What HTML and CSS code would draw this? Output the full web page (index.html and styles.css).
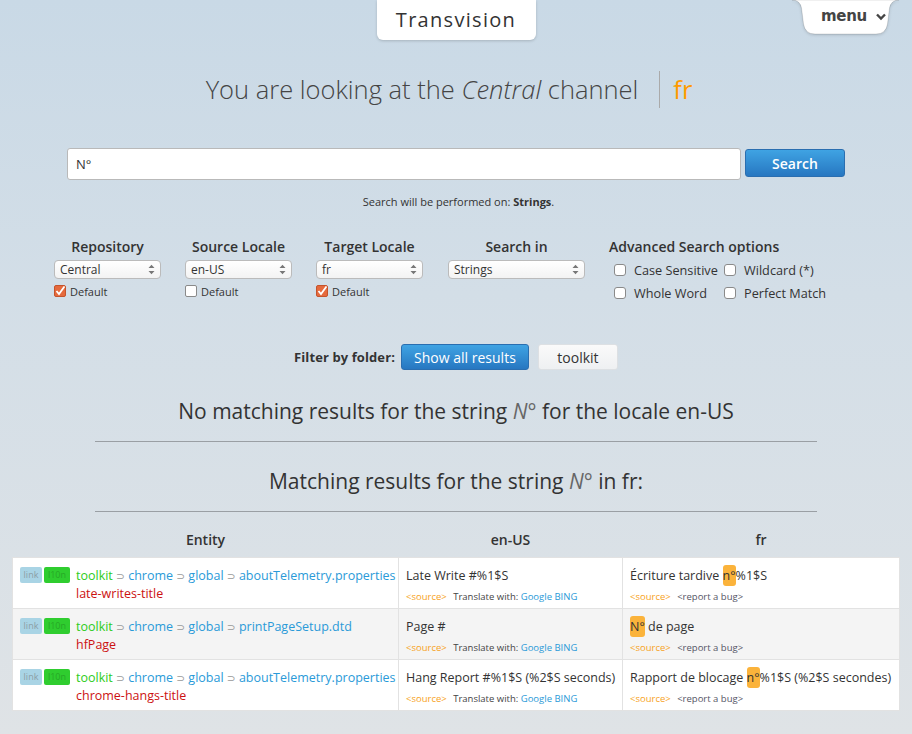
FILE: index.html
```html
<!DOCTYPE html>
<html lang="en">
<head>
<meta charset="utf-8">
<title>Transvision</title>
<link rel="stylesheet" href="styles.css">
</head>
<body>
<div class="page">
  <header class="topbar">
    <div class="brand">Transvision</div>
    <a class="menu" href="#">
      <svg class="tab" width="107" height="38" viewBox="0 0 107 38"><path d="M0 0 Q8 0 9.5 8 L11.5 24 Q13 34 23 34 L84 34 Q94 34 95.5 24 L97.5 8 Q99 0 107 0 Z" fill="#fff" stroke="rgba(0,0,0,0.12)" stroke-width="1"/></svg>
      <span class="mlabel">menu</span>
      <svg class="chev" width="10" height="8" viewBox="0 0 10 8"><path d="M1 1.5 L5 5.5 L9 1.5" fill="none" stroke="#444" stroke-width="2.4"/></svg>
    </a>
  </header>

  <h1 class="channel"><span class="channel-text">You are looking at the <em>Central</em> channel</span><span class="sep"></span><span class="loc">fr</span></h1>

  <form class="searchbar">
    <div class="input">N°</div>
    <button class="btn btn-blue btn-search" type="button">Search</button>
  </form>
  <p class="performed">Search will be performed on: <strong>Strings</strong>.</p>

  <div class="filters">
    <div class="fcol w107">
      <div class="fhead">Repository</div>
      <div class="sel"><span>Central</span><svg class="arr" width="7" height="11" viewBox="0 0 7 11"><path d="M0.5 4 L3.5 0.8 L6.5 4 Z M0.5 7 L3.5 10.2 L6.5 7 Z" fill="#777"/></svg></div>
      <label class="def"><span class="cb on"><svg width="10" height="10" viewBox="0 0 10 10"><path d="M1.5 5 L4 8 L9.5 0.5" fill="none" stroke="#fff" stroke-width="1.8"/></svg></span>Default</label>
    </div>
    <div class="fcol w107">
      <div class="fhead">Source Locale</div>
      <div class="sel"><span>en-US</span><svg class="arr" width="7" height="11" viewBox="0 0 7 11"><path d="M0.5 4 L3.5 0.8 L6.5 4 Z M0.5 7 L3.5 10.2 L6.5 7 Z" fill="#777"/></svg></div>
      <label class="def"><span class="cb"></span>Default</label>
    </div>
    <div class="fcol w107">
      <div class="fhead">Target Locale</div>
      <div class="sel"><span>fr</span><svg class="arr" width="7" height="11" viewBox="0 0 7 11"><path d="M0.5 4 L3.5 0.8 L6.5 4 Z M0.5 7 L3.5 10.2 L6.5 7 Z" fill="#777"/></svg></div>
      <label class="def"><span class="cb on"><svg width="10" height="10" viewBox="0 0 10 10"><path d="M1.5 5 L4 8 L9.5 0.5" fill="none" stroke="#fff" stroke-width="1.8"/></svg></span>Default</label>
    </div>
    <div class="fcol w137">
      <div class="fhead">Search in</div>
      <div class="sel"><span>Strings</span><svg class="arr" width="7" height="11" viewBox="0 0 7 11"><path d="M0.5 4 L3.5 0.8 L6.5 4 Z M0.5 7 L3.5 10.2 L6.5 7 Z" fill="#777"/></svg></div>
    </div>
    <div class="adv">
      <div class="fhead left">Advanced Search options</div>
      <div class="advgrid">
        <label class="opt"><span class="cb big"></span>Case Sensitive</label>
        <label class="opt"><span class="cb big"></span>Wildcard (*)</label>
        <label class="opt"><span class="cb big"></span>Whole Word</label>
        <label class="opt"><span class="cb big"></span>Perfect Match</label>
      </div>
    </div>
  </div>

  <div class="folder">
    <span class="flabel">Filter by folder:</span>
    <button class="btn btn-blue btn-all" type="button">Show all results</button>
    <button class="btn btn-light" type="button">toolkit</button>
  </div>

  <h2 class="res">No matching results for the string <em>N°</em> for the locale en-US</h2>
  <hr class="rule">
  <h2 class="res">Matching results for the string <em>N°</em> in fr:</h2>
  <hr class="rule">

  <table class="results">
    <colgroup><col class="c1"><col class="c2"><col class="c3"></colgroup>
    <thead>
      <tr><th>Entity</th><th>en-US</th><th>fr</th></tr>
    </thead>
    <tbody>
      <tr>
        <td class="ent"><div class="entwrap"><span class="badges"><span class="b-link">link</span><span class="b-l10n">l10n</span></span><div class="path"><span class="g">toolkit</span> <span class="sub">⊃</span> <span class="bl">chrome</span> <span class="sub">⊃</span> <span class="bl">global</span> <span class="sub">⊃</span> <span class="bl">aboutTelemetry.properties</span><br><span class="key">late-writes-title</span></div></div></td>
        <td><div class="str">Late Write #%1$S</div><div class="meta"><span class="src">&lt;source&gt;</span> Translate with: <span class="bl">Google</span> <span class="bl">BING</span></div></td>
        <td><div class="str">Écriture tardive <mark>n°</mark>%1$S</div><div class="meta"><span class="src">&lt;source&gt;</span> <span class="bug">&lt;report a bug&gt;</span></div></td>
      </tr>
      <tr class="alt">
        <td class="ent"><div class="entwrap"><span class="badges"><span class="b-link">link</span><span class="b-l10n">l10n</span></span><div class="path"><span class="g">toolkit</span> <span class="sub">⊃</span> <span class="bl">chrome</span> <span class="sub">⊃</span> <span class="bl">global</span> <span class="sub">⊃</span> <span class="bl">printPageSetup.dtd</span><br><span class="key">hfPage</span></div></div></td>
        <td><div class="str">Page #</div><div class="meta"><span class="src">&lt;source&gt;</span> Translate with: <span class="bl">Google</span> <span class="bl">BING</span></div></td>
        <td><div class="str"><mark>N°</mark> de page</div><div class="meta"><span class="src">&lt;source&gt;</span> <span class="bug">&lt;report a bug&gt;</span></div></td>
      </tr>
      <tr>
        <td class="ent"><div class="entwrap"><span class="badges"><span class="b-link">link</span><span class="b-l10n">l10n</span></span><div class="path"><span class="g">toolkit</span> <span class="sub">⊃</span> <span class="bl">chrome</span> <span class="sub">⊃</span> <span class="bl">global</span> <span class="sub">⊃</span> <span class="bl">aboutTelemetry.properties</span><br><span class="key">chrome-hangs-title</span></div></div></td>
        <td><div class="str">Hang Report #%1$S (%2$S seconds)</div><div class="meta"><span class="src">&lt;source&gt;</span> Translate with: <span class="bl">Google</span> <span class="bl">BING</span></div></td>
        <td><div class="str">Rapport de blocage <mark>n°</mark>%1$S (%2$S secondes)</div><div class="meta"><span class="src">&lt;source&gt;</span> <span class="bug">&lt;report a bug&gt;</span></div></td>
      </tr>
    </tbody>
  </table>
</div>
</body>
</html>
```

FILE: styles.css
```css
html, body {
  margin: 0;
  padding: 0;
}
body {
  font-family: "Open Sans", "DejaVu Sans", sans-serif;
  color: #333;
  background: linear-gradient(180deg, #c9d9e6 0%, #d3dee7 40%, #dfe3e6 100%);
  min-height: 734px;
}
.page {
  position: relative;
  width: 912px;
  min-height: 734px;
  overflow: hidden;
}
.topbar {
  height: 40px;
  display: flex;
  justify-content: center;
}
.brand {
  width: 159px;
  height: 40px;
  box-sizing: border-box;
  background: #fff;
  border-radius: 0 0 6px 6px;
  box-shadow: 0 1px 3px rgba(0,0,0,0.18);
  text-align: center;
  font-size: 20px;
  letter-spacing: 1.3px;
  line-height: 40px;
  color: #333;
}
.menu {
  position: absolute;
  top: 0;
  left: 792px;
  width: 107px;
  height: 38px;
  color: #444;
  text-decoration: none;
  font-family: "DejaVu Sans", sans-serif;
  font-weight: bold;
  font-size: 15px;
  letter-spacing: -0.3px;
}
.tab {
  position: absolute;
  left: 0;
  top: 0;
  filter: drop-shadow(0 1px 1.5px rgba(0,0,0,0.15));
}
.mlabel {
  position: absolute;
  left: 29px;
  top: 6px;
  line-height: 20px;
}
.chev {
  position: absolute;
  left: 84px;
  top: 13px;
}

.channel {
  margin: 30px 0 0;
  height: 38px;
  display: flex;
  justify-content: center;
  align-items: center;
  font-weight: 300;
  font-size: 25.5px;
  color: #444;
  padding-right: 14px;
}
.channel em { font-style: italic; }
.sep {
  width: 1px;
  height: 37px;
  background: #aaa;
  margin: 0 12px 0 21px;
}
.loc { color: #ff9a00; font-weight: 400; margin-left: 1px; }

.searchbar {
  margin: 40px 0 0;
  display: flex;
  justify-content: center;
  gap: 4px;
  height: 33px;
}
.input {
  width: 674px;
  height: 32px;
  box-sizing: border-box;
  background: #fff;
  border: 1px solid #b9b9b9;
  border-radius: 3px;
  font-size: 13px;
  line-height: 30px;
  padding-left: 8px;
  color: #333;
}
.btn {
  font-family: "Open Sans", sans-serif;
  border-radius: 3px;
  cursor: pointer;
}
.btn-blue {
  color: #fff;
  border: 1px solid #2a6eb0;
  background: linear-gradient(180deg, #3fa3e3 0%, #2777c1 100%);
  font-weight: 600;
}
.btn-search {
  width: 100px;
  height: 28px;
  margin-top: 1px;
  font-size: 14px;
}
.performed {
  margin: 13px 0 0;
  font-size: 11px;
  text-align: center;
  color: #333;
  padding-left: 5px;
}
.performed strong { font-weight: 700; }

.filters {
  margin-top: 28px;
  padding-left: 54px;
  display: flex;
  gap: 24px;
}
.fcol { display: flex; flex-direction: column; }
.w107 { width: 107px; }
.w137 { width: 137px; margin-left: 1px; }
.fhead {
  font-size: 14px;
  font-weight: 600;
  color: #333;
  text-align: center;
  white-space: nowrap;
  height: 20px;
  line-height: 20px;
}
.fhead.left { text-align: left; }
.sel {
  margin-top: 3px;
  height: 19px;
  box-sizing: border-box;
  border: 1px solid #bbb;
  border-radius: 4px;
  background: linear-gradient(180deg, #fff 0%, #f3f3f3 100%);
  display: flex;
  align-items: center;
  justify-content: space-between;
  padding: 0 5px 0 5px;
  font-size: 12px;
  color: #333;
}
.arr { display: block; }
.def {
  margin-top: 4px;
  display: flex;
  align-items: center;
  font-size: 11px;
  color: #333;
  height: 16px;
}
.cb {
  width: 12px;
  height: 12px;
  box-sizing: border-box;
  border: 1px solid #8a8a8a;
  border-radius: 2px;
  background: #fff;
  display: inline-flex;
  align-items: center;
  justify-content: center;
  margin-right: 4px;
}
.cb.on {
  background: #e56a3d;
  border-color: #c5532c;
}
.cb.big { width: 12px; height: 12px; margin-right: 8px; border-radius: 3px; }
.adv { margin-left: 0; }
.advgrid {
  margin-top: 4px;
  display: grid;
  grid-template-columns: 110px auto;
  row-gap: 5px;
  padding-left: 5px;
}
.opt {
  display: flex;
  align-items: center;
  font-size: 12.7px;
  color: #333;
  height: 18px;
}

.folder {
  margin-top: 42px;
  display: flex;
  justify-content: center;
  align-items: center;
  gap: 6px;
}
.flabel { font-size: 13px; font-weight: 700; color: #333; letter-spacing: 0.1px; }
.btn-all {
  width: 128px;
  height: 26px;
  font-size: 14px;
  font-weight: 400;
}
.btn-light {
  margin-left: 3px;
  width: 80px;
  height: 26px;
  background: linear-gradient(180deg, #fafafa 0%, #eef0f2 100%);
  border: 1px solid #dde0e3;
  font-size: 14px;
  color: #333;
}

.res {
  margin: 27px 0 0;
  text-align: center;
  font-weight: 400;
  font-size: 21px;
  color: #333;
  line-height: 28px;
}
.res em { font-style: italic; color: #666; }
.rule {
  width: 722px;
  margin: 16px auto 0;
  border: 0;
  border-top: 1px solid #9a9fa4;
  height: 0;
}
hr.rule + .res { margin-top: 25px; }

.results {
  margin: 10px 0 0 12px;
  width: 887px;
  border-collapse: collapse;
  table-layout: fixed;
  font-size: 12.5px;
}
.c1 { width: 386px; }
.c2 { width: 224px; }
.c3 { width: 277px; }
.results th {
  font-size: 14px;
  font-weight: 600;
  height: 35px;
  padding: 0;
  color: #333;
  vertical-align: middle;
}
.results tbody tr { background: #fff; }
.results tbody tr.alt { background: #f4f4f4; }
.results td {
  border: 1px solid #e2e2e2;
  vertical-align: top;
  padding: 9px 7px 0 7px;
  height: 41px;
}
.results td.ent { padding-left: 7px; }
.entwrap { display: flex; gap: 6px; }
.badges { display: flex; gap: 2px; }
.b-link, .b-l10n {
  font-size: 9px;
  line-height: 16px;
  height: 16px;
  border-radius: 2px;
  box-sizing: border-box;
  text-align: center;
  padding: 0;
}
.b-link { background: #a9d4e5; color: #8c9ea6; width: 22px; }
.b-l10n { background: #2fcd2f; color: #26a826; width: 26px; }
.path { line-height: 18px; font-size: 12.5px; white-space: nowrap; }
.g { color: #2ecc1d; }
.bl { color: #2a9ad8; }
.sub { color: #999; font-size: 10.5px; }
.key { color: #cc1111; }
.str { line-height: 18px; color: #333; white-space: nowrap; }
.meta {
  margin-top: 5px;
  font-size: 9.5px;
  color: #444;
  line-height: 14px;
  white-space: nowrap;
}
.src { color: #f7a21b; margin-right: 4px; }
.meta .bl { color: #2a9ad8; }
.bug { color: #556; }
mark {
  background: #fbb33b;
  color: #333;
  border-radius: 3px;
  padding: 2px 0;
}
```
